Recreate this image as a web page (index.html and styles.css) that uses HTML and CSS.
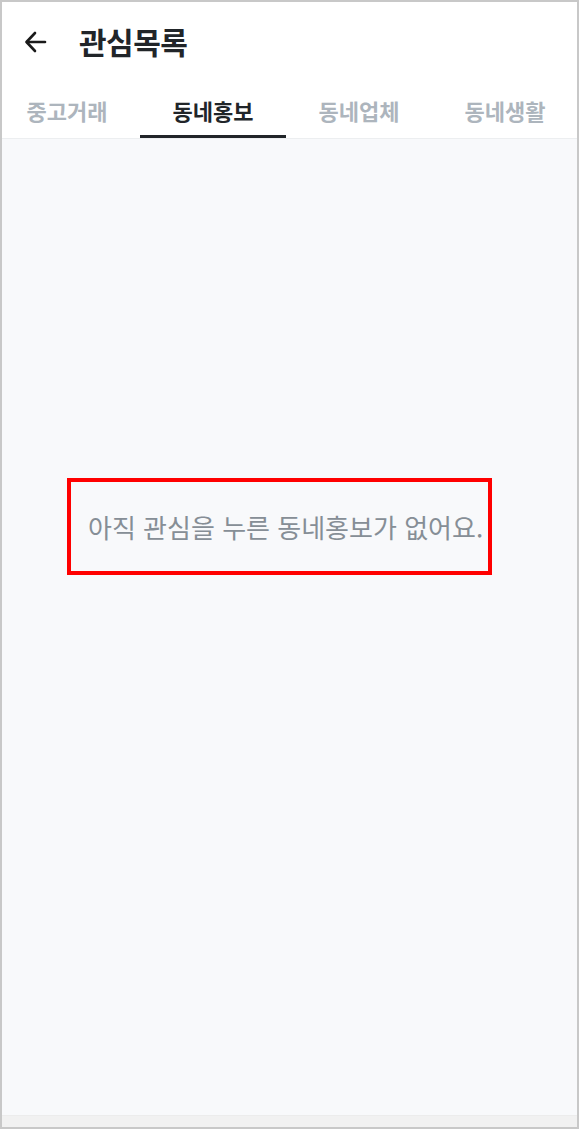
FILE: index.html
```html
<!DOCTYPE html>
<html lang="ko">
<head>
    <meta charset="UTF-8">
    <meta name="viewport" content="width=device-width, initial-scale=1.0">
    <title>관심목록</title>
    <link rel="stylesheet" href="styles.css">
</head>
<body>
    <div class="frame">
        <header class="header">
            <button class="back" type="button" aria-label="뒤로">
                <svg width="26" height="26" viewBox="0 0 26 26" fill="none" stroke="#1a1a1a" stroke-width="2.6" stroke-linecap="round" stroke-linejoin="round">
                    <path d="M22 13H4"/>
                    <path d="M12 4L3.5 13L12 22"/>
                </svg>
            </button>
            <h1 class="title">관심목록</h1>
        </header>

        <nav class="tabs">
            <div class="tab">중고거래</div>
            <div class="tab active">동네홍보</div>
            <div class="tab">동네업체</div>
            <div class="tab">동네생활</div>
        </nav>

        <main class="content">
            <div class="empty">
                <p>아직 관심을 누른 동네홍보가 없어요.</p>
            </div>
        </main>

        <div class="bottom-bar"></div>
    </div>
</body>
</html>
```

FILE: styles.css
```css
* {
    margin: 0;
    padding: 0;
    box-sizing: border-box;
}

body {
    font-family: "Noto Sans CJK KR", "Noto Sans", sans-serif;
    background-color: #fff;
}

.frame {
    width: 579px;
    height: 1129px;
    border: 2px solid #c8c8c8;
    display: flex;
    flex-direction: column;
    overflow: hidden;
}

.header {
    height: 82px;
    display: flex;
    align-items: center;
    padding-left: 20px;
    padding-bottom: 4px;
    background-color: #fff;
}

.back {
    width: 28px;
    height: 28px;
    border: none;
    background: none;
    display: flex;
    align-items: center;
    justify-content: center;
    margin-right: 29px;
    margin-top: 2px;
}

.title {
    font-size: 30px;
    line-height: 36px;
    font-weight: 700;
    color: #212529;
    letter-spacing: -0.5px;
}

.tabs {
    height: 55px;
    display: flex;
    margin-left: -8px;
    border-bottom: 1px solid #eceef0;
    background-color: #fff;
}

.tab {
    flex: 0 0 146px;
    display: flex;
    align-items: center;
    justify-content: center;
    font-size: 22px;
    font-weight: 700;
    color: #adb5bd;
    border-bottom: 3px solid transparent;
    padding-top: 1px;
}

.tab.active {
    color: #212529;
    border-bottom-color: #212529;
}

.content {
    flex: 1;
    background-color: #f8f9fb;
    padding-top: 339px;
    padding-left: 65px;
}

.empty {
    display: inline-block;
    border: 4px solid #ff0000;
    padding: 30px 5px 29px 17px;
}

.empty p {
    font-size: 26px;
    line-height: 30px;
    color: #868e96;
    white-space: nowrap;
}

.bottom-bar {
    height: 12px;
    background-color: #f1f1f1;
    border-top: 1px solid #ececec;
}
```
